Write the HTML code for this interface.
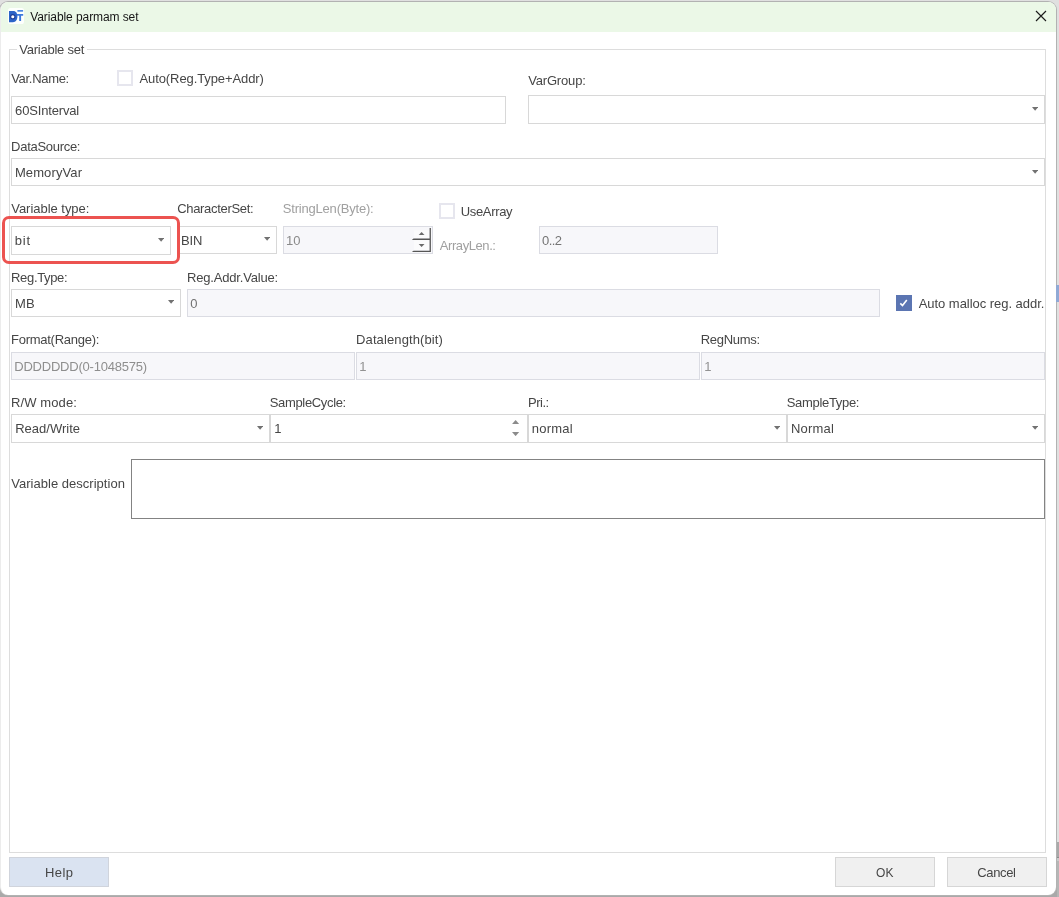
<!DOCTYPE html>
<html lang="en"><head><meta charset="utf-8"><title>Variable parmam set</title>
<style>
html,body{margin:0;padding:0;}
body{width:1059px;height:897px;overflow:hidden;position:relative;background:#e0e0e0;font-family:"Liberation Sans",sans-serif;}
.abs,.t,.box,.cb{position:absolute;box-sizing:border-box;}
.t{white-space:nowrap;line-height:normal;}
.win{left:0;top:2px;width:1056px;height:893px;background:#fff;border-left:1px solid #ececec;border-radius:8px;overflow:hidden;box-shadow:0 0 0 1px #b2b2b2;}
.title{left:0;top:0;width:1056px;height:30px;background:#ebf8e7;}
.grp{left:9px;top:49px;width:1037px;height:804px;border:1px solid #dddddd;}
.leg{left:17px;top:44px;width:70px;height:12px;background:#fff;}
.box{border:1px solid #d8d8d8;background:#fff;}
.dis{background:#f7f7fa;border-color:#dbdce3;}
.ta{border:1px solid #838383;}
.btn{border:1px solid #d6d6d6;background:#f0f0f0;}
.help{background:#dae3f1;border-color:#d0d4dc;}
.cb{width:16px;height:16px;border:2px solid #e6e6ee;background:#fff;}
.red{left:2px;top:216px;width:177.5px;height:47.5px;border:3px solid #ec5350;border-radius:7px;}
.txt{left:0;top:0;width:1059px;height:897px;will-change:transform;}

</style></head>
<body>
<div class="abs" style="left:0;top:886px;width:1059px;height:11px;background:#a9a9a9"></div>
<div class="abs win">
  <div class="abs title"></div>
</div>
<svg class="abs" style="left:8px;top:8px" width="16" height="16" viewBox="0 0 16 16">
  <rect x="0" y="0" width="16" height="16" rx="2.6" fill="#fdfffd"/>
  <path d="M1 3h4.3c2.8 0 4.1 2.4 4.1 5.6s-1.7 5.6-4.4 5.6H1z" fill="#2c64c8"/>
  <circle cx="4.8" cy="8.7" r="2.7" fill="#1f3f98"/>
  <circle cx="4.8" cy="8.7" r="1.55" fill="#fff"/>
  <rect x="9.4" y="2" width="5.7" height="1.7" fill="#4a86e2"/>
  <path d="M8.9 6h6.3v1.8h-2.1v5.2h-1.9V7.800H8.9z" fill="#3c79dc"/>
</svg>
<svg class="abs" style="left:1035px;top:10px" width="12" height="12" viewBox="0 0 12 12">
  <path d="M1 1 L11 11 M11 1 L1 11" stroke="#1c1c1c" stroke-width="1.15" fill="none"/>
</svg>
<div class="abs grp"></div>
<div class="abs leg"></div>

<div class="cb" style="left:117px;top:70px"></div>
<div class="box " style="left:11px;top:96px;width:495px;height:28px"></div>
<div class="box " style="left:528px;top:95px;width:517px;height:29px"></div>
<svg class="abs" style="left:1031.80px;top:107.1px" width="6.2" height="3.8" viewBox="0 0 6.2 3.8"><path d="M0 0H6.2L3.1 3.8z" fill="#717171"/></svg>
<div class="box " style="left:11px;top:158px;width:1034px;height:28px"></div>
<svg class="abs" style="left:1031.80px;top:169.8px" width="6.2" height="3.8" viewBox="0 0 6.2 3.8"><path d="M0 0H6.2L3.1 3.8z" fill="#717171"/></svg>
<div class="box " style="left:11px;top:226px;width:160px;height:29px"></div>
<svg class="abs" style="left:157.80px;top:238px" width="6.2" height="3.8" viewBox="0 0 6.2 3.8"><path d="M0 0H6.2L3.1 3.8z" fill="#717171"/></svg>
<div class="box " style="left:179px;top:226px;width:98px;height:28px"></div>
<svg class="abs" style="left:263.90px;top:237px" width="6.2" height="3.8" viewBox="0 0 6.2 3.8"><path d="M0 0H6.2L3.1 3.8z" fill="#717171"/></svg>
<div class="box dis" style="left:283px;top:226px;width:150px;height:28px"></div>
<svg class="abs" style="left:410px;top:227px" width="22" height="26" viewBox="0 0 22 26">
  <rect x="3.8" y="3.2" width="15.8" height="8" fill="#fbfbfc"/>
  <rect x="3.8" y="13.2" width="15.8" height="10" fill="#fbfbfc"/>
  <path d="M19.6 1.1h1.3v24h-19l1.6-1.3h16.1z" fill="#565656"/>
  <path d="M1.9 12.9l1.6-1.4h16.5v1.4z" fill="#565656"/>
  <path d="M8.7 8.1h5.8l-2.9-3.1z" fill="#6a6a6a"/>
  <path d="M8.7 16.9h5.8l-2.9 3.2z" fill="#6a6a6a"/>
</svg>
<div class="cb" style="left:439px;top:203px"></div>
<div class="box dis" style="left:539px;top:226px;width:179px;height:28px"></div>
<div class="box " style="left:11px;top:289px;width:170px;height:28px"></div>
<svg class="abs" style="left:167.90px;top:299.9px" width="6.2" height="3.8" viewBox="0 0 6.2 3.8"><path d="M0 0H6.2L3.1 3.8z" fill="#717171"/></svg>
<div class="box dis" style="left:187px;top:289px;width:693px;height:28px"></div>
<svg class="abs" style="left:896px;top:295px" width="16" height="16" viewBox="0 0 16 16"><rect width="16" height="16" fill="#5b75b2"/><path d="M4.3 8.4 L6.5 10.6 L10.8 5.1" stroke="#fff" stroke-width="1.6" fill="none"/></svg>
<div class="box dis" style="left:11px;top:352px;width:344px;height:28px"></div>
<div class="box dis" style="left:356px;top:352px;width:344px;height:28px"></div>
<div class="box dis" style="left:701px;top:352px;width:344px;height:28px"></div>
<div class="box " style="left:11px;top:414px;width:259px;height:29px"></div>
<svg class="abs" style="left:256.90px;top:425.9px" width="6.2" height="3.8" viewBox="0 0 6.2 3.8"><path d="M0 0H6.2L3.1 3.8z" fill="#717171"/></svg>
<div class="box " style="left:270px;top:414px;width:258px;height:29px"></div>
<svg class="abs" style="left:512.40px;top:419.9px" width="7.2" height="4.1" viewBox="0 0 7.2 4.1"><path d="M0 4.1H7.2L3.6 0z" fill="#8b8b8b"/></svg>
<svg class="abs" style="left:512.40px;top:432px" width="7.2" height="4.1" viewBox="0 0 7.2 4.1"><path d="M0 0H7.2L3.6 4.1z" fill="#8b8b8b"/></svg>
<div class="box " style="left:528px;top:414px;width:259px;height:29px"></div>
<svg class="abs" style="left:773.90px;top:425.9px" width="6.2" height="3.8" viewBox="0 0 6.2 3.8"><path d="M0 0H6.2L3.1 3.8z" fill="#717171"/></svg>
<div class="box " style="left:787px;top:414px;width:258px;height:29px"></div>
<svg class="abs" style="left:1031.60px;top:425.9px" width="6.2" height="3.8" viewBox="0 0 6.2 3.8"><path d="M0 0H6.2L3.1 3.8z" fill="#717171"/></svg>
<div class="box ta" style="left:131px;top:459px;width:914px;height:60px"></div>
<div class="box btn help" style="left:9px;top:857px;width:100px;height:30px"></div>
<div class="box btn" style="left:835px;top:857px;width:100px;height:30px"></div>
<div class="box btn" style="left:947px;top:857px;width:100px;height:30px"></div>
<div class="abs red"></div>
<div class="abs" style="left:1056px;top:285px;width:3px;height:17px;background:#90a9d5"></div>
<div class="abs" style="left:1057px;top:842px;width:2px;height:55px;background:#b6b6b6"></div>
<div class="abs" style="left:1057px;top:842px;width:2px;height:15px;background:#a9a9a9"></div>
<div class="abs" style="left:1057px;top:857px;width:2px;height:1px;background:#8c8c8c"></div>
<div class="abs" style="left:1057px;top:858px;width:2px;height:3px;background:#cacaca"></div>

<div class="abs txt">
<span class="t" style="left:30.25px;top:10px;font-size:12px;color:#161616;letter-spacing:-0.085px;">Variable parmam set</span>
<span class="t" style="left:19.16px;top:42px;font-size:13px;color:#464646;letter-spacing:-0.225px;">Variable set</span>
<span class="t" style="left:11.21px;top:71px;font-size:13px;color:#464646;letter-spacing:-0.304px;">Var.Name:</span>
<span class="t" style="left:139.50px;top:71px;font-size:13px;color:#464646;letter-spacing:-0.093px;">Auto(Reg.Type+Addr)</span>
<span class="t" style="left:15.09px;top:103px;font-size:13px;color:#464646;letter-spacing:-0.163px;">60SInterval</span>
<span class="t" style="left:528.21px;top:73px;font-size:13px;color:#464646;letter-spacing:-0.177px;">VarGroup:</span>
<span class="t" style="left:11.10px;top:139px;font-size:13px;color:#464646;letter-spacing:-0.292px;">DataSource:</span>
<span class="t" style="left:14.90px;top:165px;font-size:13px;color:#464646;letter-spacing:0.112px;">MemoryVar</span>
<span class="t" style="left:11.21px;top:201px;font-size:13px;color:#464646;letter-spacing:-0.027px;">Variable type:</span>
<span class="t" style="left:177.13px;top:201px;font-size:13px;color:#464646;letter-spacing:-0.303px;">CharacterSet:</span>
<span class="t" style="left:282.85px;top:201px;font-size:13px;color:#a0a0a0;letter-spacing:-0.206px;">StringLen(Byte):</span>
<span class="t" style="left:460.75px;top:204px;font-size:13px;color:#464646;letter-spacing:-0.336px;">UseArray</span>
<span class="t" style="left:14.70px;top:233px;font-size:13px;color:#464646;letter-spacing:0.793px;">bit</span>
<span class="t" style="left:180.90px;top:233px;font-size:13px;color:#464646;letter-spacing:-0.110px;">BIN</span>
<span class="t" style="left:285.90px;top:233px;font-size:13px;color:#8a8a8a;letter-spacing:0.100px;">10</span>
<span class="t" style="left:439.80px;top:238px;font-size:13px;color:#a0a0a0;letter-spacing:-0.426px;">ArrayLen.:</span>
<span class="t" style="left:542.08px;top:233px;font-size:13px;color:#747474;letter-spacing:-0.625px;">0..2</span>
<span class="t" style="left:11.05px;top:270px;font-size:13px;color:#464646;letter-spacing:-0.334px;">Reg.Type:</span>
<span class="t" style="left:187.10px;top:270px;font-size:13px;color:#464646;letter-spacing:-0.195px;">Reg.Addr.Value:</span>
<span class="t" style="left:14.90px;top:296px;font-size:13px;color:#464646;letter-spacing:0.275px;">MB</span>
<span class="t" style="left:190.17px;top:296px;font-size:13px;color:#727272;">0</span>
<span class="t" style="left:918.70px;top:296px;font-size:13px;color:#464646;letter-spacing:-0.039px;">Auto malloc reg. addr.</span>
<span class="t" style="left:11.05px;top:332px;font-size:13px;color:#464646;letter-spacing:-0.268px;">Format(Range):</span>
<span class="t" style="left:356.05px;top:332px;font-size:13px;color:#464646;letter-spacing:0.111px;">Datalength(bit)</span>
<span class="t" style="left:700.75px;top:332px;font-size:13px;color:#464646;letter-spacing:-0.281px;">RegNums:</span>
<span class="t" style="left:14.25px;top:359px;font-size:13px;color:#8e8e8e;letter-spacing:-0.214px;">DDDDDDD(0-1048575)</span>
<span class="t" style="left:359.30px;top:359px;font-size:13px;color:#929292;">1</span>
<span class="t" style="left:704.30px;top:359px;font-size:13px;color:#929292;">1</span>
<span class="t" style="left:11.00px;top:395px;font-size:13px;color:#464646;letter-spacing:0.113px;">R/W mode:</span>
<span class="t" style="left:269.75px;top:395px;font-size:13px;color:#464646;letter-spacing:-0.341px;">SampleCycle:</span>
<span class="t" style="left:528.05px;top:395px;font-size:13px;color:#464646;letter-spacing:-0.488px;">Pri.:</span>
<span class="t" style="left:786.75px;top:395px;font-size:13px;color:#464646;letter-spacing:-0.319px;">SampleType:</span>
<span class="t" style="left:15.15px;top:421px;font-size:13px;color:#464646;letter-spacing:0.017px;">Read/Write</span>
<span class="t" style="left:274.30px;top:421px;font-size:13px;color:#464646;">1</span>
<span class="t" style="left:531.80px;top:421px;font-size:13px;color:#464646;letter-spacing:0.211px;">normal</span>
<span class="t" style="left:791.00px;top:421px;font-size:13px;color:#464646;letter-spacing:0.200px;">Normal</span>
<span class="t" style="left:11.21px;top:476px;font-size:13px;color:#464646;letter-spacing:0.026px;">Variable description</span>
<span class="t" style="left:45.00px;top:865px;font-size:13px;color:#464646;letter-spacing:0.400px;">Help</span>
<span class="t" style="left:876.11px;top:866px;font-size:12px;color:#464646;letter-spacing:0.080px;">OK</span>
<span class="t" style="left:977.34px;top:865px;font-size:13px;color:#464646;letter-spacing:-0.375px;">Cancel</span>
</div>
</body></html>
